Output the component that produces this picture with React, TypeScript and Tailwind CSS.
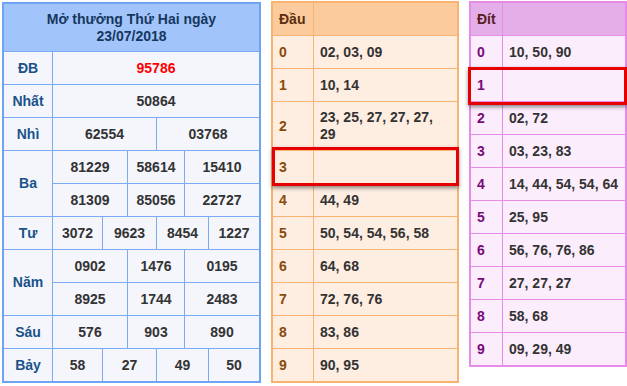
import React from "react";

const font = { fontFamily: '"Liberation Sans", Arial, sans-serif' };

type Group = { label: string; rows: { w: number[]; vals: string[]; red?: boolean }[] };

const groups: Group[] = [
  { label: "ĐB", rows: [{ w: [], vals: ["95786"], red: true }] },
  { label: "Nhất", rows: [{ w: [], vals: ["50864"] }] },
  { label: "Nhì", rows: [{ w: [104], vals: ["62554", "03768"] }] },
  {
    label: "Ba",
    rows: [
      { w: [75, 57], vals: ["81229", "58614", "15410"] },
      { w: [75, 57], vals: ["81309", "85056", "22727"] },
    ],
  },
  { label: "Tư", rows: [{ w: [50, 54, 52], vals: ["3072", "9623", "8454", "1227"] }] },
  {
    label: "Năm",
    rows: [
      { w: [75, 57], vals: ["0902", "1476", "0195"] },
      { w: [75, 57], vals: ["8925", "1744", "2483"] },
    ],
  },
  { label: "Sáu", rows: [{ w: [75, 57], vals: ["576", "903", "890"] }] },
  { label: "Bảy", rows: [{ w: [50, 54, 52], vals: ["58", "27", "49", "50"] }] },
];

function LeftTable() {
  return (
    <div className="mt-px w-[259px] border-2 border-[#6fa4f3] bg-[#f4f6fc] text-[14px] font-bold">
      <div className="flex h-[48px] flex-col items-center justify-center border-b border-[#7aabf4] bg-[#a1c5fb] leading-[17px] text-[#17375e]">
        <div>Mở thưởng Thứ Hai ngày</div>
        <div>23/07/2018</div>
      </div>
      {groups.map((g, gi) => (
        <div
          key={g.label}
          className={gi < groups.length - 1 ? "flex border-b border-[#7aabf4]" : "flex"}
        >
          <div className="flex w-[49px] items-center justify-center border-r border-[#7aabf4] text-[#1a5289]">
            {g.label}
          </div>
          <div className="flex flex-1 flex-col">
            {g.rows.map((r, ri) => (
              <div
                key={ri}
                className={
                  ri < g.rows.length - 1
                    ? "flex h-[33px] border-b border-[#7aabf4]"
                    : "flex h-[32px]"
                }
              >
                {r.vals.map((v, vi) => {
                  const last = vi === r.vals.length - 1;
                  return (
                    <div
                      key={vi}
                      className={`flex items-center justify-center ${last ? "flex-1" : "border-r border-[#7aabf4]"} ${r.red ? "text-[#ff0000]" : "text-[#333333]"}`}
                      style={last ? undefined : { width: r.w[vi] }}
                    >
                      {v}
                    </div>
                  );
                })}
              </div>
            ))}
          </div>
        </div>
      ))}
    </div>
  );
}

type SideProps = {
  title: string;
  rows: string[][];
  border: string;
  head: string;
  body: string;
  digit: string;
  titleColor: string;
  width: string;
  labelW: string;
};

function SideTable(p: SideProps) {
  return (
    <div className={`${p.width} border-2 ${p.border} ${p.body} text-[14px] font-bold`}>
      <div className={`flex h-[33px] border-b ${p.border} ${p.head}`}>
        <div className={`${p.labelW} flex items-center border-r ${p.border} pl-[6px] ${p.titleColor}`}>
          {p.title}
        </div>
        <div className="flex-1" />
      </div>
      {p.rows.map((vals, i) => {
        const last = i === p.rows.length - 1;
        const tall = vals.length > 1;
        const cls = last
          ? "flex h-[32px]"
          : tall
          ? `flex h-[49px] border-b ${p.border}`
          : `flex h-[33px] border-b ${p.border}`;
        return (
          <div key={i} className={cls}>
            <div className={`${p.labelW} flex items-center border-r ${p.border} pl-[6px] ${p.digit}`}>
              {i}
            </div>
            <div className="flex flex-1 flex-col justify-center pl-[6px] leading-[17px] text-[#333333]">
              {vals.map((v, k) => (
                <div key={k}>{v}</div>
              ))}
            </div>
          </div>
        );
      })}
    </div>
  );
}

export default function App() {
  const dau = [
    ["02, 03, 09"],
    ["10, 14"],
    ["23, 25, 27, 27, 27,", "29"],
    [""],
    ["44, 49"],
    ["50, 54, 54, 56, 58"],
    ["64, 68"],
    ["72, 76, 76"],
    ["83, 86"],
    ["90, 95"],
  ];
  const dit = [
    ["10, 50, 90"],
    [""],
    ["02, 72"],
    ["03, 23, 83"],
    ["14, 44, 54, 54, 64"],
    ["25, 95"],
    ["56, 76, 76, 86"],
    ["27, 27, 27"],
    ["58, 68"],
    ["09, 29, 49"],
  ];
  return (
    <div className="relative h-[386px] w-[627px] bg-white" style={font}>
      <div className="flex items-start gap-[10px] pl-[2px] pt-px">
        <LeftTable />
        <SideTable
          title="Đầu"
          rows={dau}
          border="border-[#f8b370]"
          head="bg-[#fccb9d]"
          body="bg-[#feede1]"
          digit="text-[#8a4a0a]"
          titleColor="text-[#5a2e0e]"
          width="w-[188px]"
          labelW="w-[41px]"
        />
        <SideTable
          title="Đít"
          rows={dit}
          border="border-[#e68be6]"
          head="bg-[#e4aee8]"
          body="bg-[#fcedfc]"
          digit="text-[#7a0a7a]"
          titleColor="text-[#5a1e1e]"
          width="w-[158px]"
          labelW="w-[32px]"
        />
      </div>
      <div className="absolute left-[272px] top-[147px] h-[39px] w-[187px] border-[3px] border-[#e60000] shadow-[0_2px_4px_rgba(0,0,0,0.45)]" />
      <div className="absolute left-[468px] top-[67px] h-[38px] w-[159px] border-[3px] border-[#e60000] shadow-[0_2px_4px_rgba(0,0,0,0.45)]" />
    </div>
  );
}
